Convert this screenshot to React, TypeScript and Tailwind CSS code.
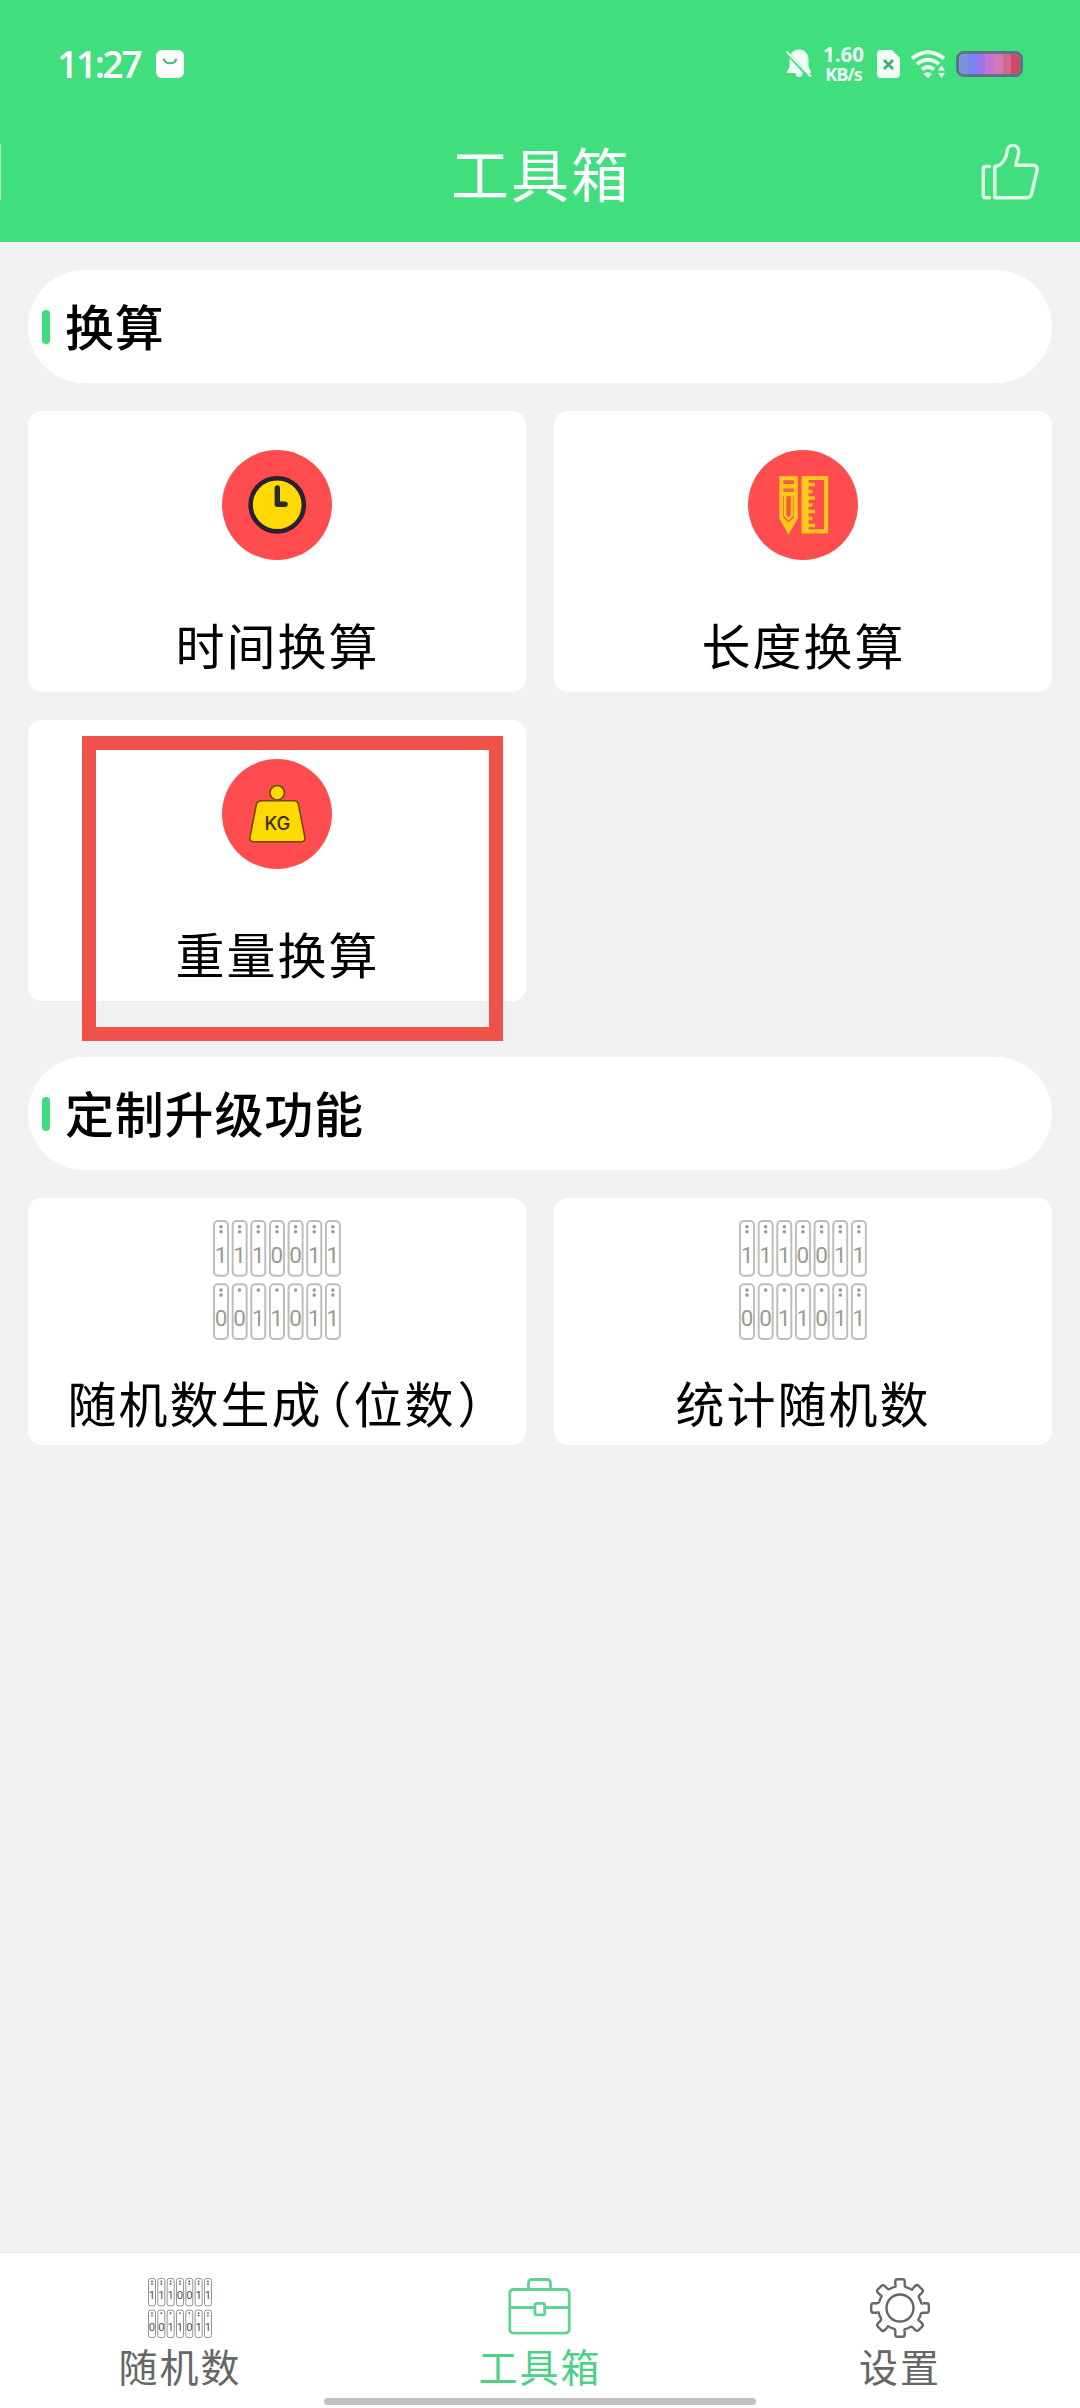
import React from 'react';

const FONT = "font-['Noto_Sans_CJK_SC',sans-serif]";

const BINARY_ROWS = [
  { digits: '1110011', dots: [2, 2, 2, 2, 2, 2, 2] },
  { digits: '0011011', dots: [2, 1, 1, 1, 1, 2, 2] },
];

const BinaryIcon: React.FC<{ className: string; frame: string; ink: string; line: number }> = ({ className, frame, ink, line }) => (
  <svg viewBox="0 0 128 120" className={className}>
    {BINARY_ROWS.map((row, r) =>
      row.digits.split('').map((digit, i) => {
        const x = 1 + i * 18.65;
        const y = 1 + r * 63.3;
        return (
          <g key={`${r}-${i}`}>
            <rect x={x} y={y} width="14" height="54.7" rx="4" fill="none" stroke={frame} strokeWidth={line} />
            <circle cx={x + 7} cy={y + 5.8} r="1.8" fill={ink} />
            {row.dots[i] > 1 && <circle cx={x + 7} cy={y + 10.8} r="1.8" fill={ink} />}
            <text x={x + 7} y={y + 41.5} textAnchor="middle" fontSize="22.5" fontFamily="Roboto, sans-serif" fill={ink}>
              {digit}
            </text>
          </g>
        );
      })
    )}
  </svg>
);

const ClockIcon = () => (
  <svg viewBox="0 0 110 110" className="w-[110px] h-[110px]">
    <circle cx="55" cy="55" r="55" fill="#ff4d4f" />
    <circle cx="55.2" cy="54.8" r="26.6" fill="#ffd900" stroke="#2b1f33" strokeWidth="4.6" />
    <path d="M55.3 38V54.3H63" fill="none" stroke="#2b2a33" strokeWidth="5.4" strokeLinecap="round" strokeLinejoin="round" />
  </svg>
);

const RulerIcon = () => (
  <svg viewBox="0 0 110 110" className="w-[110px] h-[110px]">
    <circle cx="55" cy="55" r="55" fill="#ff4d4f" />
    <path d="M33.3 28.3H47.8V68L40.5 80.5L33.3 68Z" fill="none" stroke="#ffc81a" strokeWidth="4" />
    <path d="M33 36.3H48M33 44H48" stroke="#ffc81a" strokeWidth="4.6" />
    <path d="M37.2 45V65.5L40.5 69L44 65.5V45" fill="none" stroke="#ffc81a" strokeWidth="2.4" />
    <path d="M36.5 70L40.5 73.5L44.5 70L40.5 82Z" fill="#ffc81a" stroke="#ffc81a" strokeWidth="2" />
    <path d="M40.5 47V64" stroke="#d96c1c" strokeWidth="1.6" />
    <path d="M37.5 32H43.5M37 40.2H44" stroke="#d9801c" strokeWidth="1.6" />
    <rect x="55.5" y="28" width="22.6" height="53.4" fill="none" stroke="#ffc81a" strokeWidth="4" />
    <rect x="54" y="27" width="6.6" height="55" fill="#ffc81a" />
    <path d="M60 34.5H67M60 41.5H64.5M60 48H67M60 55H64.5M60 61.5H67M60 68.5H64.5M60 75.5H67" stroke="#ffc81a" strokeWidth="3.6" />
  </svg>
);

const WeightIcon = () => (
  <svg viewBox="0 0 110 110" className="w-[110px] h-[110px]">
    <circle cx="55" cy="55" r="55" fill="#ff4d4f" />
    <g fill="#ffd900" stroke="#6b4a00" strokeWidth="1.5">
      <circle cx="55.2" cy="33.7" r="7.2" />
      <path d="M40 41.7H72Q75.5 41.7 76.3 45L82.8 78Q83.6 82.7 79.5 82.7H31.5Q27.2 82.7 28 78L34.500 45Q35.5 41.7 40 41.7Z" />
    </g>
    <text x="55.5" y="71" textAnchor="middle" fontSize="18.5" fontWeight="500" fontFamily="Inter, sans-serif" fill="#3b3000">
      KG
    </text>
  </svg>
);

const BriefcaseIcon = () => (
  <svg viewBox="0 0 64 60" className="w-[64px] h-[60px]" fill="none" stroke="#5fd394" strokeWidth="2.8">
    <rect x="1.8" y="11.5" width="59.400" height="43.6" rx="3.5" />
    <path d="M20.500 11.5V5Q20.500 1.500 24 1.500H39Q42.500 1.500 42.500 5V11.5" />
    <path d="M1.8 29.5H26.500M37 29.5H61.2" />
    <rect x="26.900" y="25.3" width="9.8" height="11.6" rx="2" />
  </svg>
);

const GearIcon = () => (
  <svg viewBox="-30 -30 60 60" className="w-[60px] h-[60px]" fill="none" stroke="#666" strokeWidth="2.4" strokeLinejoin="round">
    <circle r="13.5" />
    {[0, 45, 90, 135, 180, 225, 270, 315].map((a) => (
      <path
        key={a}
        transform={`rotate(${a})`}
        d="M-4.7-22.5V-26.5Q-4.7-28.8-2.5-28.8H2.5Q4.7-28.8 4.7-26.5V-22.5Q5-20.8 7-20.4C9-20 10.500-19.2 11.3-18.6Q12.5-17.8 12.59-19.23"
      />
    ))}
  </svg>
);

const ThumbIcon = () => (
  <svg viewBox="0 0 58 58" className="w-[58px] h-[58px]" fill="none" stroke="#e2fbe9" strokeWidth="3.4" strokeLinejoin="round" strokeLinecap="round">
    <path d="M8.5 23.5H5Q2.300 23.5 2.300 26V52Q2.300 54.8 5 54.8H8.5" />
    <path d="M13.8 54.8V23.5C21 22.8 25.5 15.5 26.2 8C26.6 0.500 37.3 0.500 37.7 8C38 13 35.5 17 34.8 22.3H52Q57 22.5 56 27.5L50.500 51Q49.5 54.8 45.5 54.8H14" />
  </svg>
);

const BATTERY = ['#7f93dc', '#7a85f5', '#9678e6', '#c672d2', '#d977b8', '#d2688c', '#cc4a68'];

const StatusBar = () => (
  <div className="flex items-center h-[84px] pt-11 px-[57px] text-white">
    <span className="w-[86px] font-['Open_Sans',sans-serif] font-semibold text-[37.5px] leading-10 tracking-[-2.6px] whitespace-nowrap">11:27</span>
    <svg viewBox="0 0 28 28" className="w-7 h-7 ml-[13px]">
      <rect width="28" height="28" rx="6" fill="#fff" />
      <path d="M8 9.5C9.5 14.5 18.5 14.5 20 9.5" fill="none" stroke="#3fbf72" strokeWidth="2.2" strokeLinecap="round" />
    </svg>
    <div className="flex items-center ml-auto">
      <svg viewBox="0 0 26 30" className="w-[26px] h-[30px]">
        <path d="M13 0.5C19 0.5 22.5 5 22.5 11V18L25 22.5V24H16.5A3.5 4 0 0 1 9.5 24H1V22.5L3.5 18V11C3.5 5 7 0.5 13 0.5Z" fill="#f0fdf4" />
        <path d="M-1 1.5L24 28.5" stroke="#40de7c" strokeWidth="4" />
        <path d="M0.5 2.5L25 27.5" stroke="#f0fdf4" strokeWidth="2.2" />
      </svg>
      <div className="flex flex-col items-center w-[43px] ml-[10px] font-['Open_Sans',sans-serif] font-bold text-[#f0fdf4] whitespace-nowrap">
        <span className="h-[19px] text-[20.5px] leading-[19px]">1.60</span>
        <span className="h-[19px] text-[18px] leading-[20px] tracking-[-1px]">KB/s</span>
      </div>
      <svg viewBox="0 0 23 28" className="w-[23px] h-7 ml-[12px]">
        <path d="M4 0H15L23 8V24Q23 28 19 28H4Q0 28 0 24V4Q0 0 4 0Z" fill="#f0fdf4" />
        <path d="M7 10L16 19M16 10L7 19" stroke="#45a870" strokeWidth="2.6" />
      </svg>
      <svg viewBox="0 0 34 28" className="w-[34px] h-7 ml-[11px]">
        <g fill="none" stroke="#f0fdf4" strokeWidth="4">
          <path d="M1 8.5Q17 -4 33 8.5" />
          <path d="M6 14Q17 5.5 28 14" />
          <path d="M11 19.5Q17 14.5 23 19.5" />
        </g>
        <path d="M12.5 24Q17 20.5 21 24L17 28Z" fill="#f0fdf4" />
        <path d="M30.5 15.5L34 20.5H27ZM30.5 28L27 23H34Z" fill="#f0fdf4" />
      </svg>
      <div className="flex w-[67px] h-[26px] ml-[11px] rounded-[8px] border-[3px] border-[#5d7388] overflow-hidden">
        {BATTERY.map((c) => (
          <span key={c} className="flex-1" style={{ backgroundColor: c }} />
        ))}
      </div>
    </div>
  </div>
);

const SectionTitle: React.FC<{ title: string }> = ({ title }) => (
  <div className="flex items-center h-[113px] pl-[14px] bg-white rounded-full">
    <span className="w-2 h-[34px] rounded-full bg-[#3fdc7c]" />
    <h2 className="ml-[15px] pb-[3px] text-[49px] leading-[60px] tracking-[0.8px] font-medium text-black">{title}</h2>
  </div>
);

const ToolCard: React.FC<{ icon: React.ReactNode; children: React.ReactNode; marked?: boolean }> = ({ icon, children, marked }) => (
  <div className="relative flex flex-col items-center h-[281px] pt-[39px] bg-white rounded-[14px]">
    {icon}
    <span className="mt-[54px] pl-px text-[49px] leading-[60px] tracking-[2px] text-black">{children}</span>
    {marked && <div className="absolute left-[54px] top-4 w-[421px] h-[305px] border-[14px] border-[#ee5249]" />}
  </div>
);

const RandomCard: React.FC<{ children: React.ReactNode }> = ({ children }) => (
  <div className="flex flex-col items-center h-[247px] pt-[22px] bg-white rounded-[14px]">
    <BinaryIcon className="w-32 h-[120px]" frame="#bdbdb9" ink="#9a9a94" line={2} />
    <span className="mt-[32px] text-[49px] leading-[60px] tracking-[2px] text-black whitespace-nowrap">{children}</span>
  </div>
);

const NavItem: React.FC<{ icon: React.ReactNode; label: string; active?: boolean }> = ({ icon, label, active }) => (
  <div className={`flex flex-1 flex-col items-center pt-[25px] ${active ? 'text-[#4fd088]' : 'text-[#666]'}`}>
    {icon}
    <span className="mt-px text-[39px] leading-[52px] tracking-[2px]">{label}</span>
  </div>
);

export default function App() {
  return (
    <div className={`flex flex-col w-[1080px] h-[2408px] bg-[#f1f1f4] overflow-hidden ${FONT}`}>
      <header className="flex flex-col h-[242px] bg-[#40de7c]">
        <StatusBar />
        <div className="flex flex-1 items-center pt-[18px]">
          <div className="w-px h-14 bg-white/60" />
          <h1 className="flex-1 pl-[100px] text-center text-[58px] leading-[80px] tracking-[2px] text-white">工具箱</h1>
          <div className="w-[99px]">
            <ThumbIcon />
          </div>
        </div>
      </header>

      <main className="flex flex-1 flex-col px-7 pt-7">
        <SectionTitle title="换算" />
        <div className="grid grid-cols-2 gap-7 mt-7">
          <ToolCard icon={<ClockIcon />}>时间换算</ToolCard>
          <ToolCard icon={<RulerIcon />}>长度换算</ToolCard>
          <ToolCard icon={<WeightIcon />} marked>重量换算</ToolCard>
        </div>
        <div className="mt-14">
          <SectionTitle title="定制升级功能" />
        </div>
        <div className="grid grid-cols-2 gap-7 mt-7">
          <RandomCard>
            随机数生成
            <span className="inline-block w-[31px] text-right [font-feature-settings:'halt']">（</span>
            位数
            <span className="inline-block w-[31px] pl-[2px] text-left [font-feature-settings:'halt']">）</span>
          </RandomCard>
          <RandomCard>统计随机数</RandomCard>
        </div>
      </main>

      <nav className="relative flex h-[156px] bg-white border-t border-[#e6e6e8]">
        <NavItem icon={<BinaryIcon className="w-[64px] h-[60px]" frame="#777" ink="#555" line={1.6} />} label="随机数" />
        <NavItem icon={<BriefcaseIcon />} label="工具箱" active />
        <NavItem icon={<GearIcon />} label="设置" />
        <div className="absolute left-[324px] bottom-[3px] w-[432px] h-[7px] rounded-full bg-[#c1c1c1]" />
      </nav>
    </div>
  );
}
